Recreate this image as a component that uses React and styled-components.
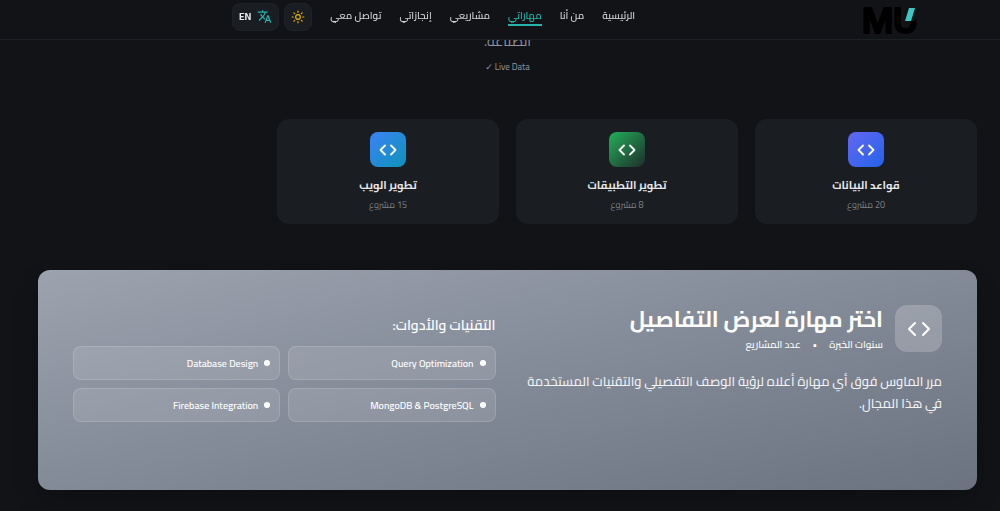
import React from 'react';
import styled, { createGlobalStyle } from 'styled-components';
import { Code, Sun } from 'lucide-react';
import { MdTranslate } from 'react-icons/md';

const GlobalStyle = createGlobalStyle`
  * {
    box-sizing: border-box;
  }
  body {
    margin: 0;
    background: #121317;
    color: #e6e8ea;
    font-family: Cairo, 'Titillium Web', 'Noto Sans', 'DejaVu Sans', sans-serif;
    overflow-x: hidden;
  }
  h2, h3, p, ul {
    margin: 0;
    padding: 0;
  }
`;

const Header = styled.header`
  position: fixed;
  top: 0;
  left: 0;
  right: 0;
  z-index: 10;
  display: flex;
  align-items: center;
  justify-content: space-between;
  height: 40px;
  padding: 0 8% 6px 232px;
  background: #121317;
  border-bottom: 1px solid #1d2024;
`;

const LogoLink = styled.a`
  display: block;
  align-self: flex-start;
  svg {
    display: block;
  }
`;

const HeaderTools = styled.div`
  display: flex;
  align-items: center;
  gap: 18px;
`;

const Nav = styled.nav`
  display: flex;
  gap: 18px;
`;

const NavLink = styled.a`
  font-size: 10px;
  font-weight: 600;
  line-height: 17px;
  text-decoration: none;
  white-space: nowrap;
  color: ${props => props.$active ? '#27b5aa' : '#cfd1d4'};
  border-bottom: 2px solid ${props => props.$active ? '#27b5aa' : 'transparent'};
`;

const Buttons = styled.div`
  display: flex;
  gap: 5px;
`;

const ToolButton = styled.button`
  display: flex;
  align-items: center;
  justify-content: center;
  gap: 6px;
  height: 28px;
  min-width: 28px;
  padding: 0 6px;
  border: 1px solid #1f2327;
  border-radius: 8px;
  background: #1a1d21;
  color: #e6e8ea;
  font-family: inherit;
  font-size: 10px;
  font-weight: 700;
  cursor: pointer;
`;

const Main = styled.main`
  padding: 32px 23px 21px 38px;
`;

const Intro = styled.div`
  margin-bottom: 44px;
  text-align: center;
`;

const IntroText = styled.p`
  color: #8d93a0;
  font-size: 14px;
  line-height: 18px;
`;

const LiveData = styled.p`
  padding-top: 9px;
  color: #8d93a0;
  font-size: 9px;
  line-height: 16px;
`;

const Cards = styled.div`
  display: grid;
  grid-template-columns: repeat(4, 1fr);
  gap: 17px;
`;

const Card = styled.article`
  display: flex;
  flex-direction: column;
  align-items: center;
  height: 105px;
  padding-top: 13px;
  border-radius: 12px;
  background: #1a1d21;
`;

const CardIcon = styled.div`
  display: flex;
  align-items: center;
  justify-content: center;
  width: 36px;
  height: 35px;
  margin-bottom: 8px;
  border-radius: 8px;
  color: #fff;
  background: ${props => props.$background};
`;

const CardTitle = styled.h3`
  font-size: 11px;
  font-weight: 700;
  line-height: 20px;
`;

const CardCount = styled.p`
  color: #7d8187;
  font-size: 9px;
  line-height: 20px;
`;

const Panel = styled.section`
  display: grid;
  grid-template-columns: 1fr 1fr;
  gap: 24px;
  min-height: 220px;
  margin-top: 46px;
  padding: 35px;
  border-radius: 12px;
  color: #fff;
  background: linear-gradient(to bottom right, #9ca3af, #6b7280);
  box-shadow: 0 12px 24px rgba(0, 0, 0, 0.2);
`;

const Summary = styled.div`
  display: flex;
  gap: 12px;
`;

const SummaryIcon = styled.div`
  display: flex;
  align-items: center;
  justify-content: center;
  flex: none;
  width: 47px;
  height: 47px;
  border-radius: 12px;
  background: rgba(255, 255, 255, 0.2);
`;

const SummaryTitle = styled.h2`
  font-size: 22px;
  font-weight: 700;
  line-height: 28px;
  white-space: nowrap;
`;

const Stats = styled.div`
  display: flex;
  gap: 12px;
  font-size: 10px;
  font-weight: 500;
  line-height: 24px;
`;

const Description = styled.p`
  padding-top: 13px;
  font-size: 13px;
  font-weight: 500;
  line-height: 22px;
  color: #f1f2f4;
`;

const Tools = styled.div`
  padding-top: 8px;
`;

const ToolsTitle = styled.h3`
  font-size: 14px;
  font-weight: 600;
  line-height: 24px;
`;

const ToolList = styled.ul`
  display: grid;
  grid-template-columns: 1fr 1fr;
  gap: 8px;
  padding-top: 9px;
  list-style: none;
`;

const Tool = styled.li`
  display: flex;
  align-items: center;
  gap: 6px;
  height: 34px;
  padding: 0 9px;
  border: 1px solid rgba(255, 255, 255, 0.14);
  border-radius: 8px;
  background: rgba(255, 255, 255, 0.1);
  font-size: 10px;
  font-weight: 600;
`;

const Dot = styled.span`
  width: 6px;
  height: 6px;
  border-radius: 50%;
  background: #fff;
`;

const links = [
  { id: 'home', label: 'الرئيسية' },
  { id: 'about', label: 'من أنا' },
  { id: 'skills', label: 'مهاراتي' },
  { id: 'projects', label: 'مشاريعي' },
  { id: 'achievements', label: 'إنجازاتي' },
  { id: 'contact', label: 'تواصل معي' },
];

const skills = [
  { title: 'قواعد البيانات', count: '20 مشروع', background: 'linear-gradient(to bottom right, #6366f1, #2563eb)' },
  { title: 'تطوير التطبيقات', count: '8 مشروع', background: 'linear-gradient(to bottom right, #22b05a, #1f2d2a)' },
  { title: 'تطوير الويب', count: '15 مشروع', background: 'linear-gradient(to bottom right, #3b82f6, #0d94b8)' },
];

const tools = ['Query Optimization', 'Database Design', 'MongoDB & PostgreSQL', 'Firebase Integration'];

const Logo = () => (
  <svg width="60" height="42" viewBox="0 0 60 42" direction="ltr" aria-hidden="true">
    <g fontFamily="Inter, sans-serif" fontWeight="600" fontSize="34" fill="#000" stroke="#000" strokeWidth="2" strokeLinejoin="round">
      <text x="2" y="33">M</text>
      <text x="33" y="33">U</text>
    </g>
    <path d="M47 6h12v9l-4 6H43z" fill="#121317" />
    <path d="M49 8h6l-4 13h-6z" fill="#3cc9c3" />
  </svg>
);

const App = () => {
  const [active, setActive] = React.useState('skills');

  return (
    <div dir="rtl" lang="ar">
      <GlobalStyle />
      <Header>
        <LogoLink href="#home" aria-label="MU"><Logo /></LogoLink>
        <HeaderTools>
          <Nav>
            {links.map(link => (
              <NavLink key={link.id} href={`#${link.id}`} $active={active === link.id} onClick={() => setActive(link.id)}>
                {link.label}
              </NavLink>
            ))}
          </Nav>
          <Buttons>
            <ToolButton aria-label="Theme"><Sun size={14} color="#e5b20c" /></ToolButton>
            <ToolButton><MdTranslate size={15} color="#27b5aa" />EN</ToolButton>
          </Buttons>
        </HeaderTools>
      </Header>

      <Main>
        <Intro>
          <IntroText>الصناعة.</IntroText>
          <LiveData dir="ltr">✓ Live Data</LiveData>
        </Intro>

        <Cards>
          {skills.map(skill => (
            <Card key={skill.title}>
              <CardIcon $background={skill.background}><Code size={18} strokeWidth={2.4} /></CardIcon>
              <CardTitle>{skill.title}</CardTitle>
              <CardCount>{skill.count}</CardCount>
            </Card>
          ))}
        </Cards>

        <Panel>
          <div>
            <Summary>
              <SummaryIcon><Code size={24} /></SummaryIcon>
              <div>
                <SummaryTitle>اختر مهارة لعرض التفاصيل</SummaryTitle>
                <Stats>
                  <span>سنوات الخبرة</span>
                  <span>•</span>
                  <span>عدد المشاريع</span>
                </Stats>
              </div>
            </Summary>
            <Description>
              مرر الماوس فوق أي مهارة أعلاه لرؤية الوصف التفصيلي والتقنيات المستخدمة في هذا المجال.
            </Description>
          </div>
          <Tools>
            <ToolsTitle>التقنيات والأدوات:</ToolsTitle>
            <ToolList>
              {tools.map(tool => (
                <Tool key={tool}><Dot /><span dir="ltr">{tool}</span></Tool>
              ))}
            </ToolList>
          </Tools>
        </Panel>
      </Main>
    </div>
  );
};

export default App;
